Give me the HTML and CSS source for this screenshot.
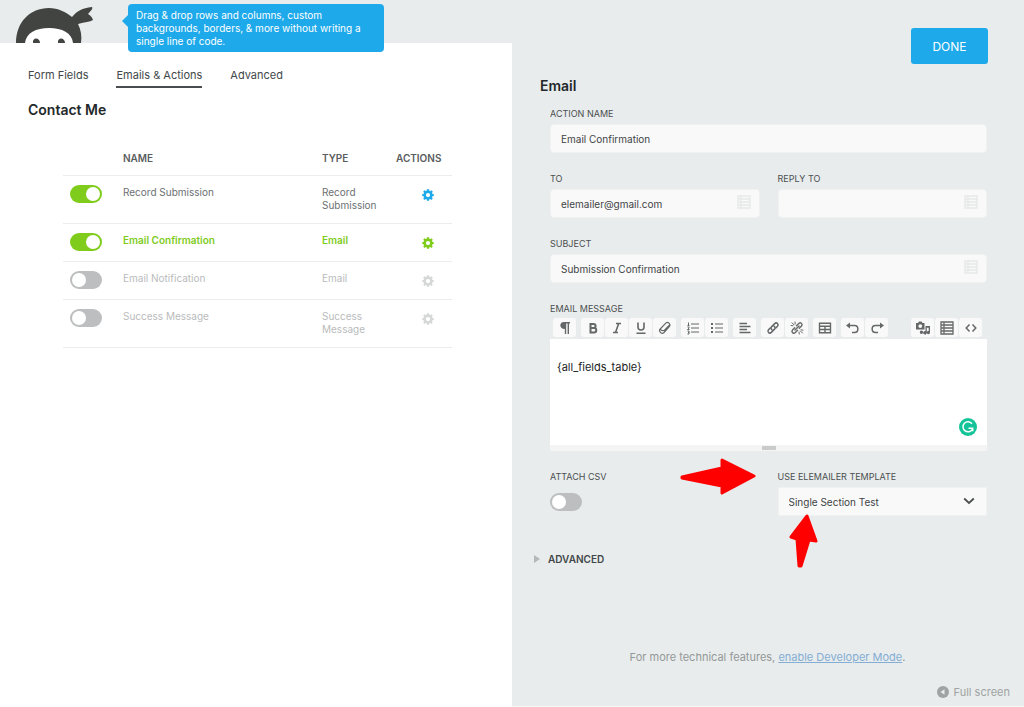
FILE: index.html
```html
<!DOCTYPE html>
<html lang="en">
<head>
<meta charset="utf-8">
<meta name="viewport" content="width=device-width, initial-scale=1">
<title>Contact Me – Emails &amp; Actions</title>
<link rel="stylesheet" href="styles.css">
</head>
<body>
<svg class="defs" aria-hidden="true">
  <symbol id="gear" viewBox="0 0 12 12"><path fill-rule="evenodd" d="M4.900.3h2.200l.3 1.500.8.4L9.500 1.300 10.800 2.700 9.900 4l.3.8 1.500.3v2l-1.500.3-.3.8.9 1.300-1.400 1.400-1.300-.9-.8.3-.3 1.500H4.900L4.600 10.300l-.8-.3-1.300.9L1.200 9.500l.9-1.300-.3-.8-1.500-.3V5l1.500-.3.3-.8L1.200 2.600 2.600 1.200l1.300.9.8-.3zM6 4a2.100 2.100 0 1 0 0 4.200A2.100 2.100 0 0 0 6 4z"/></symbol>
  <symbol id="merge" viewBox="0 0 14 14"><path fill="none" stroke="currentColor" stroke-width="1.300" d="M1 1h12v12H1zM1 4h12M1 7h12M1 10h12M4 1v12"/></symbol>
</svg>
<div class="app">
  <main class="builder">
    <header class="topbar">
      <svg class="logo" viewBox="0 0 78 36" role="img" aria-label="Ninja">
        <path fill="#424442" d="M0 36C0 15 14 1 33 1c9 0 17 4 23 9C61 4 66 1 76 0c1 1 0 3-4 7 3 2 4 3 5 6-3 2-8 2-15 4 3 6 4 12 3 19z"/>
        <path fill="#fff" d="M9 36c1-10 11-15 24-15s23 5 24 15z"/>
        <path fill="#424442" d="M17 36c-1-6 7-6 7 0zM42 36c-1-6 7-6 7 0z"/>
      </svg>
      <p class="tip">Drag &amp; drop rows and columns, custom backgrounds, borders, &amp; more without writing a single line of code.</p>
    </header>
    <nav class="tabs">
      <a href="#fields">Form Fields</a>
      <a href="#actions" class="active" aria-current="page">Emails &amp; Actions</a>
      <a href="#advanced">Advanced</a>
    </nav>
    <h1 class="title form-title">Contact Me</h1>
    <table class="actions">
      <thead><tr><th class="col-toggle"></th><th>Name</th><th class="col-type">Type</th><th class="col-gear">Actions</th></tr></thead>
      <tbody>
        <tr><td><input type="checkbox" class="switch" aria-label="Record Submission" checked></td><td>Record Submission</td><td>Record Submission</td><td class="gear-cell"><button class="gear blue" aria-label="Settings"><svg><use href="#gear"/></svg></button></td></tr>
        <tr class="current"><td><input type="checkbox" class="switch" aria-label="Email Confirmation" checked></td><td>Email Confirmation</td><td>Email</td><td class="gear-cell"><button class="gear" aria-label="Settings"><svg><use href="#gear"/></svg></button></td></tr>
        <tr class="off"><td><input type="checkbox" class="switch" aria-label="Email Notification"></td><td>Email Notification</td><td>Email</td><td class="gear-cell"><button class="gear" aria-label="Settings"><svg><use href="#gear"/></svg></button></td></tr>
        <tr class="off"><td><input type="checkbox" class="switch" aria-label="Success Message"></td><td>Success Message</td><td>Success Message</td><td class="gear-cell"><button class="gear" aria-label="Settings"><svg><use href="#gear"/></svg></button></td></tr>
      </tbody>
    </table>
  </main>

  <aside class="drawer">
    <button class="done">DONE</button>
    <h2 class="title">Email</h2>
    <form class="fields">
      <div class="field wide">
        <label for="name">Action Name</label>
        <input id="name" type="text" class="box" value="Email Confirmation">
      </div>
      <div class="field">
        <label for="to">To</label>
        <div class="with-icon"><input id="to" type="text" class="box" value="elemailer@gmail.com"><svg class="merge"><use href="#merge"/></svg></div>
      </div>
      <div class="field">
        <label for="reply">Reply To</label>
        <div class="with-icon"><input id="reply" type="text" class="box"><svg class="merge"><use href="#merge"/></svg></div>
      </div>
      <div class="field wide">
        <label for="subject">Subject</label>
        <div class="with-icon"><input id="subject" type="text" class="box" value="Submission Confirmation"><svg class="merge"><use href="#merge"/></svg></div>
      </div>
      <div class="field wide message">
        <label for="message">Email Message</label>
        <div class="toolbar">
          <div class="group"><button type="button" aria-label="Style"><svg viewBox="0 0 14 14"><path fill="currentColor" d="M6 1h6v1.500h-1V13H9.600V2.500H8.200V13H6.800V8C1 8 1 1 6 1z"/></svg></button></div>
          <div class="group">
            <button type="button" aria-label="Bold"><svg viewBox="0 0 14 14"><path fill="none" stroke="currentColor" stroke-width="2" d="M4.500 3h3c2.800 0 2.800 4 0 4h-3zM4.500 7H8c3 0 3 4.500 0 4.500H4.500z"/></svg></button>
            <button type="button" aria-label="Italic"><svg viewBox="0 0 14 14"><path fill="none" stroke="currentColor" stroke-width="1.600" d="M6 2.500h5M3 11.500h5M8.700 2.500l-3.200 9"/></svg></button>
            <button type="button" aria-label="Underline"><svg viewBox="0 0 14 14"><path fill="none" stroke="currentColor" stroke-width="1.600" d="M4 1.500V6c0 4 6 4 6 0V1.500M2.500 12.200h9"/></svg></button>
            <button type="button" aria-label="Clear formatting"><svg viewBox="0 0 14 14"><path fill="none" stroke="currentColor" stroke-width="1.200" stroke-linejoin="round" d="M2.200 8 7.800 2.200c1-1 2.200-1 3.200 0s1.300 2.200.3 3.300L6 11.500c-1 1-2.300 1.200-3.300.2S1.200 9 2.200 8zM2.200 8c1 1.500 2.300 2 4.300 1.200L11.600 4"/></svg></button>
          </div>
          <div class="group">
            <button type="button" aria-label="Ordered list"><svg viewBox="0 0 14 14"><path fill="none" stroke="currentColor" stroke-width="1" d="M5 3h8M5 7h8M5 11h8M2.500 1.500v3M1.500 4.500h2M1.500 6h1.500v1L1.500 8.500h2M1.500 10h1.500v3H1.500M2 11.500h1"/></svg></button>
            <button type="button" aria-label="Unordered list"><svg viewBox="0 0 14 14"><path fill="none" stroke="currentColor" stroke-width="1.100" d="M5 3h8M5 7h8M5 11h8"/><path fill="currentColor" d="M1 2h2v2H1zM1 6h2v2H1zM1 10h2v2H1z"/></svg></button>
          </div>
          <div class="group"><button type="button" aria-label="Align"><svg viewBox="0 0 14 14"><path fill="none" stroke="currentColor" stroke-width="1.500" d="M1.500 2.500H9M1.500 5.500h11M1.500 8.500H9M1.500 11.500h11"/></svg></button></div>
          <div class="group">
            <button type="button" aria-label="Link"><svg viewBox="0 0 14 14"><g fill="none" stroke="currentColor" stroke-width="1.500" stroke-linecap="round"><path d="M6 8.800c-1.500-1.200-1.200-2.300-.3-3.200l3-3c2-1.800 4.500.6 2.800 2.700L9.800 7"/><path d="M8 5.200c1.500 1.200 1.200 2.300.3 3.200l-3 3c-2 1.800-4.500-.6-2.800-2.700L4.200 7"/></g></svg></button>
            <button type="button" aria-label="Unlink"><svg viewBox="0 0 14 14"><g fill="none" stroke="currentColor" stroke-width="1.400" stroke-linecap="round"><path d="M6.500 4.700l2.300-2.200c2-1.800 4.300.6 2.700 2.600L9.300 7.300M7.500 9.300l-2.200 2.200c-2 1.800-4.400-.6-2.800-2.600l2.200-2.200M5 9l4-4"/><path stroke-width="1" d="M1 4.500l2 .3M2 1.800l2 2M5 1l.2 2M9 11l.3 2M10.500 10l2 2M11 8.800l2 .4"/></g></svg></button>
          </div>
          <div class="group"><button type="button" aria-label="Table"><svg viewBox="0 0 14 14"><path fill="none" stroke="currentColor" stroke-width="1.400" d="M1.500 2.200h11v9.600h-11zM1.500 5.200h11M1.500 8.500h11M7 5v7"/></svg></button></div>
          <div class="group">
            <button type="button" aria-label="Undo"><svg viewBox="0 0 14 14"><path fill="none" stroke="currentColor" stroke-width="1.500" d="M2 4.500h6.500c4.500 0 4.500 7 0 7H6"/><path fill="currentColor" d="M0 4.500 4 1.500v6z"/></svg></button>
            <button type="button" aria-label="Redo"><svg viewBox="0 0 14 14"><path fill="none" stroke="currentColor" stroke-width="1.500" d="M12 4.500H5.500c-4.500 0-4.500 7 0 7H8"/><path fill="currentColor" d="M14 4.500 10 1.500v6z"/></svg></button>
          </div>
          <div class="group last">
            <button type="button" aria-label="Add media"><svg viewBox="0 0 14 14"><path fill="currentColor" fill-rule="evenodd" d="M0 2h2l1-1.500h2.500L6.500 2h2v6.500H0zM4.300 3.200a1.900 1.900 0 1 0 0 3.800 1.900 1.900 0 0 0 0-3.800zM9.500 5H14v6.500a1.600 1.600 0 1 1-1.300-1.500V6.800h-1.900v5a1.800 1.800 0 1 1-1.300-1.700zM5.500 9.500a1.700 1.700 0 1 1-.1 3.400 1.700 1.700 0 0 1 .1-3.400z"/></svg></button>
            <button type="button" aria-label="Merge tags"><svg><use href="#merge"/></svg></button>
            <button type="button" aria-label="Code"><svg viewBox="0 0 14 14"><path fill="none" stroke="currentColor" stroke-width="1.500" d="M5.500 3.500 2.200 7l3.300 3.500M8.500 3.500 11.800 7l-3.300 3.500"/></svg></button>
          </div>
        </div>
        <div class="editor">
          <textarea id="message">{all_fields_table}</textarea>
          <svg class="grammar" viewBox="0 0 18 18" aria-hidden="true"><circle cx="9" cy="9" r="9" fill="#15c39a"/><path fill="none" stroke="#fff" stroke-width="1.500" d="M13 5.800A5 5 0 1 0 13.500 11M9.500 10.200h4.200v3"/></svg>
          <div class="resize"><span></span></div>
        </div>
      </div>
      <div class="field">
        <label for="csv">Attach CSV</label>
        <input id="csv" type="checkbox" class="switch csv">
      </div>
      <div class="field">
        <label for="template">Use Elemailer Template</label>
        <div class="with-icon">
          <select id="template" class="box square"><option>Single Section Test</option></select>
          <svg class="chevron" viewBox="0 0 12 8"><path fill="none" stroke="#4c4f50" stroke-width="1.800" d="M1.200 1.500 6 6l4.800-4.500"/></svg>
        </div>
        <svg class="arrow-right" viewBox="0 0 76 38" aria-hidden="true"><path d="M2 19 42 10V2L74 18 42 35V28L2 20z"/></svg>
        <svg class="arrow-up" viewBox="0 0 29 54" aria-hidden="true"><path d="M18 2 27 27 20 26 12 52H10L8 25 2 23z"/></svg>
      </div>
    </form>
    <button class="more"><svg viewBox="0 0 6 8"><path d="M0 0 6 4 0 8z" fill="#b5b8b8"/></svg>Advanced</button>
    <p class="dev">For more technical features, <a href="#dev">enable Developer Mode</a>.</p>
    <button class="full"><svg viewBox="0 0 12 12"><circle cx="6" cy="6" r="6" fill="#a0a3a3"/><path fill="#e8ecec" d="M3.500 6 7.500 3.300v5.400z"/></svg>Full screen</button>
  </aside>
</div>
</body>
</html>
```
FILE: styles.css
```css
* { box-sizing: border-box; }
body, h1, h2, p { margin: 0; }
body, button, input, select, textarea { font-family: Inter, "Liberation Sans", sans-serif; }
button { padding: 0; border: 0; background: none; color: inherit; }
svg { display: block; }
.defs { position: absolute; width: 0; height: 0; }
.app { display: grid; grid-template-columns: 1fr 1fr; min-height: 100vh; background: #fff; }

.topbar { display: flex; align-items: flex-start; height: 43px; padding: 4px 16px 0; background: #e8ecec; }
.logo { width: 78px; height: 36px; margin-top: 3px; }
.tip { position: relative; width: 256px; margin-left: 34px; padding: 5px 8px 4px; border-radius: 4px; background: #1ea9ea; color: #fff; font-size: 10px; line-height: 13px; }
.tip::before { content: ""; position: absolute; left: -6px; top: 11px; border: 6px solid transparent; border-left: 0; border-right-color: #1ea9ea; }
.tabs { display: flex; gap: 28px; padding: 24px 28px 0; font-size: 11px; line-height: 16px; }
.tabs a { padding-bottom: 3px; border-bottom: 2px solid transparent; color: #424749; text-decoration: none; }
.tabs .active { border-color: #4a4d4f; }
.title { color: #23282a; font-size: 14px; font-weight: 600; line-height: 20px; }
.form-title { padding: 12px 28px 0; }

.actions { width: calc(100% - 123px); margin: 19px 60px 0 63px; border-collapse: collapse; table-layout: fixed; color: #6b7072; font-size: 10px; line-height: 13px; }
.actions th { height: 36px; padding: 3px 0 0; color: #5a5d5e; font-weight: 600; text-align: left; text-transform: uppercase; }
.actions tr { border-bottom: 1px solid #eceeee; }
.actions td { height: 38px; padding: 10px 0 11px; vertical-align: top; }
.actions td:first-child { padding: 9px 0 0 7px; }
.actions .gear-cell { padding: 13px 0 0 26px; }
.col-toggle { width: 60px; }
.col-type { width: 74px; }
.col-gear { width: 56px; }
.actions .current { color: #80cc1c; font-weight: 600; }
.actions .off { color: #b9bbbc; }
.gear { width: 12px; height: 12px; display: block; }
.gear svg { width: 12px; height: 12px; fill: currentColor; }
.blue { color: #1ea9ea; }
.off .gear { color: #d6d8d8; }

.switch { appearance: none; display: block; width: 32px; height: 18px; margin: 0; padding: 2px; border-radius: 9px; background: #bcbebf; }
.switch::before { content: ""; display: block; width: 14px; height: 14px; border-radius: 50%; background: #fff; }
.switch:checked { background: #80cc1c; }
.switch:checked::before { margin-left: auto; }

.drawer { display: flex; flex-direction: column; padding: 28px 36px 6px 28px; border-bottom: 1px solid #f6f8f8; background: #e8ecec; }
.done { align-self: flex-end; width: 77px; height: 36px; border-radius: 3px; background: #1ea9ea; color: #fff; font-size: 12px; }
.drawer .title { margin-top: 12px; }
.fields { display: grid; grid-template-columns: 1fr 1fr; gap: 19px 18px; margin: 11px 1px 0 10px; }
.field { position: relative; }
.wide { grid-column: 1 / -1; }
.field label { display: block; margin-bottom: 4px; color: #4b4f50; font-size: 9px; line-height: 13px; text-transform: uppercase; }
.box { appearance: none; display: block; width: 100%; height: 29px; padding: 0 10px; border: 1px solid #f0f2f2; border-radius: 4px; background: #f9f9f9; color: #3f4446; font-size: 10px; }
.square { border-radius: 0; }
.with-icon { position: relative; }
.merge { position: absolute; top: 6px; right: 9px; width: 14px; height: 14px; color: #e6e9e9; }
.chevron { position: absolute; top: 10px; right: 12px; width: 12px; height: 8px; pointer-events: none; }

.message label { margin-bottom: 3px; }
.toolbar { display: flex; gap: 5px; padding: 0 5px 2px 3px; }
.group { display: flex; gap: 1px; }
.last { margin-left: auto; }
.toolbar button { display: grid; place-items: center; width: 23px; height: 19px; border-radius: 3px; background: #f9f9f9; color: #656868; }
.toolbar svg { width: 14px; height: 14px; }
.editor { position: relative; }
.editor textarea { display: block; width: 100%; height: 106px; padding: 20px 7px; border: 0; resize: none; background: #fff; color: #1c1e1f; font-size: 11px; line-height: 16px; }
.grammar { position: absolute; right: 10px; bottom: 15px; width: 18px; height: 18px; }
.resize { display: grid; place-items: center; height: 6px; background: #f4f4f4; }
.resize span { width: 14px; height: 4px; background: #c9cbcb; }
.field .csv { margin-top: 10px; }
.arrow-right, .arrow-up { position: absolute; fill: #f00; stroke: #f00; stroke-width: 3; stroke-linejoin: round; }
.arrow-right { left: -98px; top: -12px; width: 76px; height: 38px; }
.arrow-up { left: 11px; top: 44px; width: 29px; height: 54px; }

.more { display: flex; align-items: center; gap: 8px; align-self: flex-start; margin: 35px 0 0 -6px; color: #424749; font-size: 10px; font-weight: 600; line-height: 16px; text-transform: uppercase; }
.more svg { width: 6px; height: 8px; }
.dev { margin: auto 0 19px; padding-left: 7px; color: #949899; font-size: 11px; line-height: 16px; text-align: center; }
.dev a { color: #84add4; }
.full { display: flex; align-items: center; gap: 5px; align-self: flex-end; margin-right: -22px; color: #a0a3a3; font-size: 11px; line-height: 16px; }
.full svg { width: 12px; height: 12px; }
```
